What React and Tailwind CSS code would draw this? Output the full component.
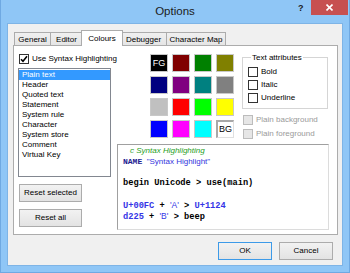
import React from "react";

const ui = "font-['Liberation_Sans',Arial,sans-serif]";
const mono = "font-['Liberation_Mono','Courier_New',monospace]";

function Check({ checked = false, disabled = false }) {
  return (
    <span
      className={
        "relative flex h-[10px] w-[10px] shrink-0 items-center justify-center border " +
        (disabled ? "border-[#bcbcbc] bg-[#e6e6e6]" : "border-[#333333] bg-white")
      }
    >
      {checked && (
        <svg width="8" height="8" viewBox="0 0 8 8" className="block">
          <path d="M1 4.2 L3 6.3 L7 1.3" fill="none" stroke="#000" strokeWidth="1.6" />
        </svg>
      )}
    </span>
  );
}

function CheckRow({ label, checked, disabled, className = "" }) {
  return (
    <div className={"flex h-[10px] items-center gap-[3px] " + className}>
      <Check checked={checked} disabled={disabled} />
      <span className={"leading-[10px] " + (disabled ? "text-[#9a9a9a]" : "text-black")}>{label}</span>
    </div>
  );
}

function Btn({ children, className = "", def = false }) {
  return (
    <div
      className={
        "flex items-center justify-center border bg-linear-to-b from-[#f2f2f2] to-[#e3e3e3] text-black " +
        (def ? "border-[#3c9ae8] " : "border-[#acacac] ") +
        className
      }
    >
      {children}
    </div>
  );
}

const colours = [
  "#000000", "#800000", "#008000", "#808000",
  "#000080", "#800080", "#008080", "#808080",
  "#c0c0c0", "#ff0000", "#00ff00", "#ffff00",
  "#0000ff", "#ff00ff", "#00ffff", "#ffffff",
];

const items = [
  "Plain text",
  "Header",
  "Quoted text",
  "Statement",
  "System rule",
  "Character",
  "System store",
  "Comment",
  "Virtual Key",
];

function Tab({ label, w, active = false }) {
  if (active) {
    return (
      <div
        className={`relative z-10 -mx-[2px] -mb-px flex h-[16px] items-center justify-center border border-b-0 border-[#acacac] bg-white ${w}`}
      >
        <span className="leading-none">{label}</span>
      </div>
    );
  }
  return (
    <div
      className={`-ml-px flex h-[13px] items-center justify-center border border-b-0 border-[#acacac] bg-linear-to-b from-[#f0f0f0] to-[#e5e5e5] first:ml-0 ${w}`}
    >
      <span className="pt-px leading-none">{label}</span>
    </div>
  );
}

export default function App() {
  return (
    <div className={"flex h-[273px] w-[350px] flex-col overflow-hidden border-x border-b border-[#6fa9e2] bg-[#8fc6f6] text-[8px] " + ui}>
      {/* title bar */}
      <div className="relative flex h-[23px] shrink-0 items-center justify-center">
        <span className="text-[11.5px] leading-none text-[#1b1b1b]">Options</span>
        <span className="absolute left-[297px] top-[4px] text-[9px] font-bold leading-none text-[#1b1b1b]">?</span>
        <div className="absolute left-[310px] top-0 flex h-[15px] w-[37px] items-center justify-center bg-[#c75050]">
          <svg width="7" height="7" viewBox="0 0 7 7">
            <path d="M0.5 0.5 L6.5 6.5 M6.5 0.5 L0.5 6.5" stroke="#fff" strokeWidth="1.6" />
          </svg>
        </div>
      </div>

      {/* client area */}
      <div className="ml-[6px] flex h-[243px] w-[336px] flex-col border border-[#7eb4e6] bg-[#f0f0f0] px-[5px] pt-[8px]">
        {/* tabs */}
        <div className="flex h-[13px] items-end pl-[1px]">
          <Tab label="General" w="w-[37px]" />
          <Tab label="Editor" w="w-[33px]" />
          <Tab label="Colours" w="w-[42px]" active />
          <Tab label="Debugger" w="w-[47px]" />
          <Tab label="Character Map" w="w-[60px]" />
        </div>

        {/* tab page */}
        <div className="flex h-[190px] w-[325px] border border-[#acacac] bg-white pl-[4px] pt-[8px]">
          {/* left column */}
          <div className="flex w-[93px] shrink-0 flex-col">
            <CheckRow label="Use Syntax Highlighting" checked className="ml-px whitespace-nowrap" />
            <div className="mt-[4px] h-[109px] w-[93px] border border-[#828790] bg-white pt-px">
              {items.map((it, i) => (
                <div
                  key={it}
                  className={
                    "h-[10px] pl-[3px] leading-[10px] " +
                    (i === 0 ? "bg-[#3399ff] text-white" : "text-black")
                  }
                >
                  {it}
                </div>
              ))}
            </div>
            <Btn className="ml-px mt-[7px] h-[18px] w-[63px]">Reset selected</Btn>
            <Btn className="ml-px mt-[7px] h-[18px] w-[63px]">Reset all</Btn>
          </div>

          {/* right area */}
          <div className="ml-[6px] flex flex-col">
            <div className="flex">
              <div className="ml-[33px] grid grid-cols-[repeat(4,18px)] grid-rows-[repeat(4,18px)] gap-[4px]">
                {colours.map((c, i) => (
                  <div
                    key={i}
                    className={
                      "flex items-center justify-center border text-[9px] leading-none " +
                      (i === 15
                        ? "border-l-2 border-t-2 border-[#a8a8a8] border-r-[#e0e0e0] border-b-[#e0e0e0] text-black"
                        : "border-[#c8c8c8] text-white")
                    }
                    style={{ backgroundColor: c }}
                  >
                    {i === 0 ? "FG" : i === 15 ? "BG" : ""}
                  </div>
                ))}
              </div>

              <div className="ml-[8px] flex flex-col">
                <fieldset className="h-[56px] w-[86px] border border-[#d5d5d5] pl-[5px] -mt-[1px]">
                  <legend className="ml-[3px] px-px leading-[9px] text-black">Text attributes</legend>
                  <div className="mt-[5px] flex flex-col gap-[3px]">
                    <CheckRow label="Bold" />
                    <CheckRow label="Italic" />
                    <CheckRow label="Underline" />
                  </div>
                </fieldset>
                <div className="ml-px mt-[6px] flex flex-col gap-[4px]">
                  <CheckRow label="Plain background" disabled />
                  <CheckRow label="Plain foreground" disabled />
                </div>
              </div>
            </div>

            {/* code preview */}
            <div className="mt-[5px] h-[86px] w-[212px] border border-b-[#dcdcdc] border-l-[#a0a0a0] border-r-[#dcdcdc] border-t-[#a0a0a0] bg-white pl-[5px] leading-[11px] whitespace-pre">
              <div className="h-[11px] pl-[7px] italic text-[#1e9e1e]">c Syntax Highlighting</div>
              <div className="h-[11px]">
                <span className={mono + " text-[8px] font-bold text-[#1c1c90]"}>NAME</span>
                <span className="text-[#3333dd]">{"  \"Syntax Highlight\""}</span>
              </div>
              <div className="h-[11px]" />
              <div className={"h-[11px] text-[8.7px] font-bold text-black " + mono}>begin Unicode &gt; use(main)</div>
              <div className="h-[11px]" />
              <div className={"h-[11px] text-[8.7px] font-bold " + mono}>
                <span className="text-[#3535e6]">U+00FC</span>
                <span className="text-black"> + </span>
                <span className={ui + " text-[8.5px] font-normal text-[#3535e6]"}>'A'</span>
                <span className="text-black"> &gt; </span>
                <span className="text-[#3535e6]">U+1124</span>
              </div>
              <div className={"h-[11px] text-[8.7px] font-bold " + mono}>
                <span className="text-[#3535e6]">d225</span>
                <span className="text-black"> + </span>
                <span className={ui + " text-[8.5px] font-normal text-[#3535e6]"}>'B'</span>
                <span className="text-black"> &gt; </span>
                <span className="text-black">beep</span>
              </div>
            </div>
          </div>
        </div>

        {/* dialog buttons */}
        <div className="mt-[7px] flex justify-end gap-[7px] pr-[4px]">
          <Btn def className="h-[18px] w-[54px]">OK</Btn>
          <Btn className="h-[18px] w-[54px]">Cancel</Btn>
        </div>
      </div>
    </div>
  );
}
